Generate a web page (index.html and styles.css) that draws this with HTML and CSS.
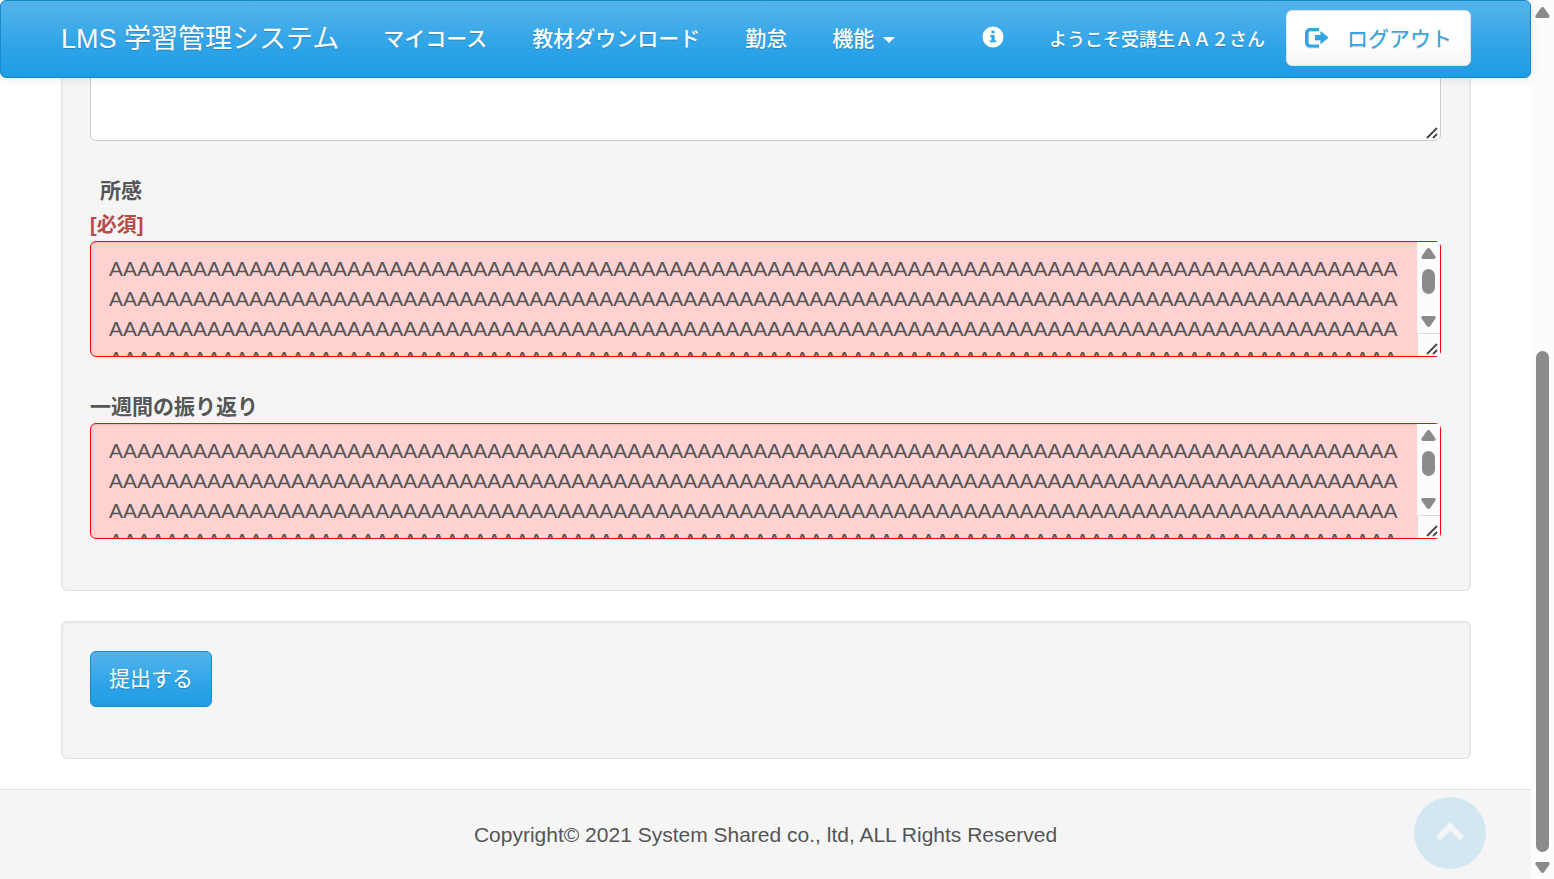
FILE: index.html
```html
<!DOCTYPE html>
<html lang="ja">
<head>
<meta charset="utf-8">
<meta name="viewport" content="width=device-width, initial-scale=1">
<title>LMS 学習管理システム</title>
<link rel="stylesheet" href="styles.css">
</head>
<body>
<div class="viewport">
  <div class="page">
    <header class="navbar">
      <a class="brand" href="#">LMS 学習管理システム</a>
      <nav class="menu">
        <a href="#">マイコース</a>
        <a href="#">教材ダウンロード</a>
        <a href="#">勤怠</a>
        <a href="#">機能 <span class="caret"></span></a>
      </nav>
      <div class="account">
        <a class="info" href="#" aria-label="お知らせ">
          <svg width="22" height="22" viewBox="0 0 22 22"><path fill="#fff" fill-rule="evenodd" d="M11 0.500a10.500 10.500 0 1 0 0 21a10.500 10.500 0 1 0 0-21zM9.500 4.500h3v3h-3zM8 9h4.700v5.500h1.800v1.800H7.500v-1.800h1.900v-3.700H8z"/></svg>
        </a>
        <span class="welcome">ようこそ受講生ＡＡ２さん</span>
        <button class="logout" type="button">
          <svg width="24" height="22" viewBox="0 0 24 22"><path fill="#2fa4e7" d="M14 1H5.500Q0 1 0 6.500v8.500Q0 20.500 5.500 20.500H14v-3H5.500Q3.500 17.500 3.500 15.500V6Q3.500 4 5.500 4H14z"/><path fill="#2fa4e7" d="M15.500 4L23.500 10.500L15.500 17v-4H10V8h5.500z"/></svg>
          <span class="logout-text">ログアウト</span>
        </button>
      </div>
    </header>

    <main>
      <form class="content">
        <section class="well">
          <div class="field">
            <div class="control">
              <textarea aria-label="報告内容"></textarea>
              <svg class="grip grip-over" width="12" height="12" viewBox="0 0 12 12"><path d="M1 11L11 1M7 11l4-4"/></svg>
            </div>
          </div>
          <div class="field">
            <label class="label label-required" for="impression"><span class="name">所感</span><span class="required">[必須]</span></label>
            <div class="control control-error">
              <textarea id="impression"></textarea>
              <div class="bar" aria-hidden="true">
                <svg class="arrow" width="15" height="11" viewBox="0 0 15 11"><path d="M7.500 0Q8.500 0 9.200 1L14.500 8.500Q15.200 11 13 11H2Q-0.200 11 0.500 8.500L5.800 1Q6.500 0 7.500 0z"/></svg>
                <span class="thumb"></span>
                <svg class="arrow arrow-down" width="15" height="11" viewBox="0 0 15 11"><path d="M7.500 11Q6.500 11 5.800 10L0.500 2.500Q-0.200 0 2 0H13Q15.200 0 14.500 2.500L9.200 10Q8.500 11 7.500 11z"/></svg>
                <span class="corner"><svg class="grip" width="12" height="12" viewBox="0 0 12 12"><path d="M1 11L11 1M7 11l4-4"/></svg></span>
              </div>
            </div>
          </div>
          <div class="field">
            <label class="label" for="review">一週間の振り返り</label>
            <div class="control control-error">
              <textarea id="review"></textarea>
              <div class="bar" aria-hidden="true">
                <svg class="arrow" width="15" height="11" viewBox="0 0 15 11"><path d="M7.500 0Q8.500 0 9.200 1L14.500 8.500Q15.200 11 13 11H2Q-0.200 11 0.500 8.500L5.800 1Q6.500 0 7.500 0z"/></svg>
                <span class="thumb"></span>
                <svg class="arrow arrow-down" width="15" height="11" viewBox="0 0 15 11"><path d="M7.500 11Q6.500 11 5.800 10L0.500 2.500Q-0.200 0 2 0H13Q15.200 0 14.500 2.500L9.200 10Q8.500 11 7.500 11z"/></svg>
                <span class="corner"><svg class="grip" width="12" height="12" viewBox="0 0 12 12"><path d="M1 11L11 1M7 11l4-4"/></svg></span>
              </div>
            </div>
          </div>
        </section>
        <section class="well">
          <button class="submit" type="submit">提出する</button>
        </section>
      </form>
    </main>

    <footer class="footer">Copyright© 2021 System Shared co., ltd, ALL Rights Reserved</footer>
  </div>

  <div class="page-bar" aria-hidden="true">
    <svg class="arrow" width="15" height="11" viewBox="0 0 15 11"><path d="M7.500 0Q8.500 0 9.200 1L14.500 8.500Q15.200 11 13 11H2Q-0.200 11 0.500 8.500L5.800 1Q6.500 0 7.500 0z"/></svg>
    <span class="page-thumb"></span>
    <svg class="arrow" width="15" height="11" viewBox="0 0 15 11"><path d="M7.500 11Q6.500 11 5.800 10L0.500 2.500Q-0.200 0 2 0H13Q15.200 0 14.500 2.500L9.200 10Q8.500 11 7.500 11z"/></svg>
  </div>
</div>

<a class="to-top" href="#" aria-label="ページの先頭へ">
  <svg width="30" height="22" viewBox="0 0 30 22"><path fill="none" stroke="#f5f5f5" stroke-width="6" d="M3 16.500L15 4.500l12 12"/></svg>
</a>
<script src="main.js"></script>
</body>
</html>
```

FILE: styles.css
```css
* { box-sizing: border-box; }

body {
  margin: 0;
  background: #fff;
  color: #555;
  font-family: "Liberation Sans", "Noto Sans CJK JP", sans-serif;
  font-size: 21px;
  line-height: 30px;
}

a { color: inherit; text-decoration: none; }
svg { display: block; flex: none; }
button { font: inherit; cursor: pointer; }

.viewport {
  display: grid;
  grid-template-columns: minmax(0, 1fr) 23px;
  min-height: 100vh;
}

.page { display: flex; flex-direction: column; }

.navbar {
  position: sticky;
  top: 0;
  z-index: 10;
  display: flex;
  align-items: center;
  gap: 44px;
  min-height: 78px;
  padding: 0 59px 2px 60px;
  border: 1px solid #178acc;
  border-radius: 6px;
  background: linear-gradient(#54b4eb, #2fa4e7 60%, #1d9ce5);
  box-shadow: 0 1px 10px rgba(0, 0, 0, .1);
  color: #fff;
  text-shadow: 0 1px 1px rgba(0, 0, 0, .2);
  white-space: nowrap;
}

.brand { padding-top: 2px; font-size: 27px; }
.menu { display: flex; gap: 45px; padding-top: 2px; font-weight: 500; }

.caret {
  display: inline-block;
  margin-left: 3px;
  vertical-align: 3px;
  border: 6px solid transparent;
  border-top-color: #fff;
  border-bottom: 0;
}

.account { display: flex; align-items: center; margin-left: auto; }
.info { margin: 0 45px 2px 0; }
.welcome { margin-right: 21px; padding-top: 4px; font-size: 18px; font-weight: 500; }

.logout {
  display: flex;
  align-items: center;
  gap: 18px;
  height: 56px;
  padding: 0 18px;
  border: 1px solid #e2e2e2;
  border-radius: 6px;
  background: linear-gradient(#fff, #fff 60%, #f5f5f5);
  color: #2fa4e7;
  text-shadow: 0 1px 1px rgba(0, 0, 0, .2);
}

.logout svg { filter: drop-shadow(0 1px 0 rgba(0, 0, 0, .15)); }
.logout-text { padding-top: 2px; }

/* The first card continues under the sticky bar. */
main { margin-top: -83px; padding: 0 60px 30px 61px; }
.content { display: flex; flex-direction: column; gap: 30px; }

.well {
  padding: 29px 29px 51px 28px;
  border: 1px solid #e3e3e3;
  border-radius: 6px;
  background: #f5f5f5;
  box-shadow: inset 0 1px 3px rgba(0, 0, 0, .08);
}

.field + .field { margin-top: 35px; }

.label {
  display: flex;
  flex-direction: column;
  font-weight: bold;
  line-height: 30px;
  padding-bottom: 1px;
}

.label-required { gap: 4px; }
.name { padding-left: 10px; }
.required { color: #b94a48; font-size: 20px; }

.control {
  position: relative;
  display: flex;
  height: 116px;
  border: 1px solid #ccc;
  border-radius: 6px;
  background: #fff;
}

.control-error {
  border-color: #f00;
  background: #ffd1d1;
  box-shadow: inset 0 1px 2px rgba(0, 0, 0, .1);
}

textarea {
  flex: 1;
  min-width: 0;
  margin: 0;
  padding: 12px 18px;
  border: 0;
  outline: 0;
  background: transparent;
  color: #555;
  font: inherit;
  overflow: hidden;
  overflow-wrap: anywhere;
  resize: none;
}

.arrow { fill: #8b8b8b; }
.grip { fill: none; stroke: #444; stroke-width: 1.800; }
.grip-over { position: absolute; right: 2px; bottom: 1px; }

.bar {
  display: flex;
  flex-direction: column;
  align-items: center;
  width: 23px;
  padding-top: 6px;
  background: #fcfcfc;
}

.thumb {
  width: 13px;
  height: 25px;
  margin-top: 10px;
  border-radius: 7px;
  background: #8b8b8b;
}

.arrow-down { margin: auto 0 6px; }

.corner {
  display: flex;
  justify-content: flex-end;
  align-items: flex-end;
  width: 100%;
  height: 23px;
  padding: 1px 2px 1px 1px;
  border: solid #dcdcdc;
  border-width: 1px 0 0 1px;
}

.submit {
  display: block;
  height: 56px;
  padding: 0 18px;
  border: 1px solid #178acc;
  border-radius: 6px;
  background: linear-gradient(#54b4eb, #2fa4e7 60%, #1d9ce5);
  color: #fff;
  text-shadow: 0 1px 1px rgba(0, 0, 0, .2);
}

.footer {
  flex: 1;
  padding: 30px 0 29px;
  border-top: 1px solid #e3e3e3;
  background: #f5f5f5;
  text-align: center;
}

.page-bar {
  position: sticky;
  top: 0;
  display: flex;
  flex-direction: column;
  align-items: center;
  height: 100vh;
  padding: 7px 0 6px;
  background: #fcfcfc;
}

.page-thumb {
  width: 13px;
  height: 57vh;
  margin: auto 0 10px;
  border-radius: 7px;
  background: #8b8b8b;
}

.to-top {
  position: fixed;
  right: 68px;
  bottom: 10px;
  display: grid;
  place-items: center;
  width: 72px;
  height: 72px;
  border-radius: 50%;
  background: #d3e7f2;
}
```

FILE: main.js
```js
for (const id of ["impression", "review"]) {
  document.getElementById(id).value = "A".repeat(2000);
}
```
